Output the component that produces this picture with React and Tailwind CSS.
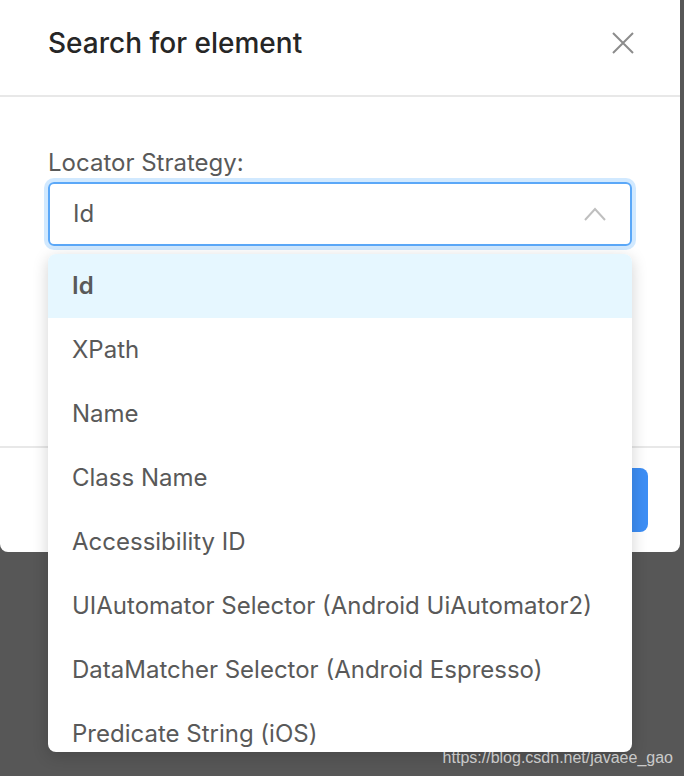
const OPTIONS = [
  'Id',
  'XPath',
  'Name',
  'Class Name',
  'Accessibility ID',
  'UIAutomator Selector (Android UiAutomator2)',
  'DataMatcher Selector (Android Espresso)',
  'Predicate String (iOS)',
];

export default function App() {
  const selected = 'Id';

  return (
    <div className="relative w-[684px] h-[776px] overflow-hidden bg-[#575757] font-['Inter',sans-serif]">
      {/* Modal */}
      <div className="w-[680px] h-[552px] bg-white rounded-b-lg flex flex-col">
        <div className="h-[97px] shrink-0 border-b-2 border-[#e8e8e8] pl-12 pr-[46px] pb-[9px] flex items-center justify-between">
          <h2 className="text-[28px] font-medium text-[#262626]">Search for element</h2>
          <svg width="22" height="22" viewBox="0 0 22 22" className="text-[#8c8c8c]">
            <path d="M1 1 L21 21 M21 1 L1 21" stroke="currentColor" strokeWidth="2" fill="none" />
          </svg>
        </div>

        <div className="flex-1 px-12 pt-[51px]">
          <label className="block text-[24px] leading-[30px] text-[#595959] mb-[4px]">Locator Strategy:</label>
          <div className="h-[64px] w-[584px] rounded-[6px] border-2 border-[#5ba8f8] ring-4 ring-[#1890ff]/20 flex items-center justify-between pl-[23px] pr-[24px]">
            <span className="text-[24px] text-[#595959]">Id</span>
            <svg width="22" height="14" viewBox="0 0 22 14" className="text-[#bfbfbf]">
              <path d="M1 13 L11 2 L21 13" stroke="currentColor" strokeWidth="2" fill="none" />
            </svg>
          </div>
        </div>

        <div className="h-[106px] shrink-0 border-t-2 border-[#e8e8e8] flex items-center justify-end pr-8">
          <button className="h-[64px] w-[150px] rounded-lg bg-[#3d8ef5] text-white text-[24px]">Search</button>
        </div>
      </div>

      {/* Dropdown menu */}
      <div className="absolute left-12 top-[254px] w-[584px] h-[498px] overflow-hidden rounded-lg bg-white shadow-[0_4px_16px_rgba(0,0,0,0.18)]">
        {OPTIONS.map((opt) => (
          <div
            key={opt}
            className={`h-[64px] flex items-center px-[24px] text-[24px] ${
              opt === selected ? 'bg-[#e6f7ff] font-semibold text-[#595959]' : 'text-[#595959]'
            }`}
          >
            {opt}
          </div>
        ))}
      </div>

      {/* Watermark */}
      <div className="absolute right-[11px] bottom-[8px] text-[16px] leading-[20px] text-white/70 font-['Liberation_Sans',sans-serif]">
        https://blog.csdn.net/javaee_gao
      </div>
    </div>
  );
}
